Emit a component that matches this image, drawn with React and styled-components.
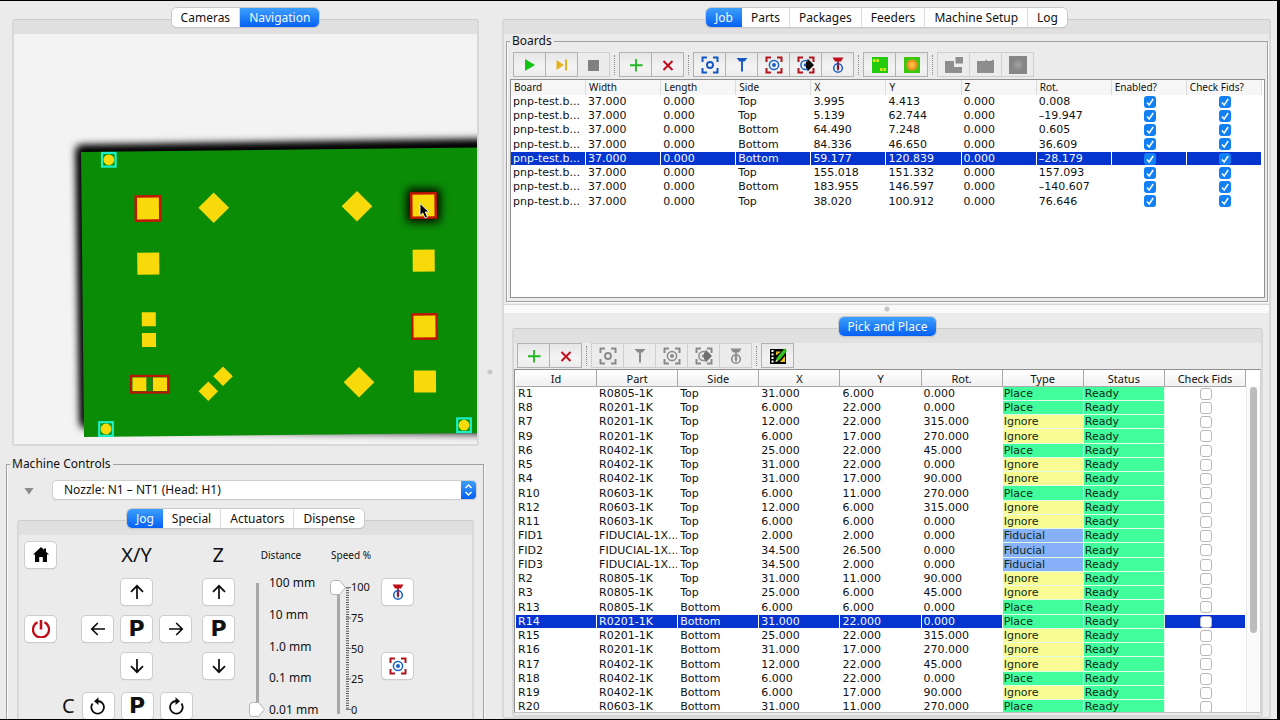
import React from "react";
import styled, { createGlobalStyle, css } from "styled-components";

const GlobalStyle = createGlobalStyle`
  * { box-sizing: border-box; }
  body {
    margin: 0;
    background: #000;
    color: #111;
    font: 12px/14px "Noto Sans", "Open Sans", sans-serif;
  }
  button, select, input { font: inherit; color: inherit; margin: 0; }
`;

const Window = styled.main`
  display: grid;
  grid-template-columns: 485fr 10px 782fr;
  grid-template-rows: minmax(0, 1fr);
  height: 100vh;
  overflow: hidden;
  background: #ebebeb;
  border: solid #000;
  border-width: 1px 3px 1px 0;
`;

const LeftPane = styled.section`
  min-width: 0;
  padding-top: 7px;
`;

const RightPane = styled.section`
  display: flex;
  flex-direction: column;
  min-width: 0;
  min-height: 0;
  padding: 7px 6px 0 7px;
`;

const Splitter = styled.div`
  display: flex;
  align-items: center;
  justify-content: center;
  padding-top: 24px;
`;

const SplitBar = styled.div`
  display: flex;
  align-items: center;
  justify-content: center;
  flex: none;
  height: 9px;
  margin-top: 2px;
  background: #fafafa;
  border-top: 1px solid #d6d6d6;
`;

const Grip = styled.span`
  width: 6px;
  height: 6px;
  border-radius: 50%;
  background: #c4c4c4;
  border: 1px solid #dedede;
`;

/* ---------- tabs ---------- */

const TabPane = styled.div`
  display: flex;
  flex-direction: column;
  margin: ${(p) => p.$margin || "0"};
  ${(p) => p.$grow && css`flex: 1; min-height: 0;`}
`;

const TabList = styled.div`
  position: relative;
  z-index: 1;
  display: flex;
  flex: none;
  align-self: center;
  height: 19px;
  background: #fff;
  border-radius: 5px;
  box-shadow: 0 0 0 1px #c9c9c9, 0 1px 1px #999;
  overflow: hidden;
`;

const Tab = styled.button`
  padding: 0 9px;
  border: 0;
  border-right: 1px solid #dcdcdc;
  background: ${(p) => (p.$active ? "linear-gradient(#3d9ffb, #0560f3)" : "#fff")};
  color: ${(p) => (p.$active ? "#f4f9ff" : "#111")};
  line-height: 18px;
  white-space: nowrap;
  &:last-child, &[aria-selected="true"] { border-right: 0; }
`;

const TabFrame = styled.div`
  display: flex;
  flex-direction: column;
  flex: 1;
  min-height: 0;
  margin-top: -8px;
  border: solid #d8d8d8;
  border-width: 1px 2px 2px 2px;
  border-top-color: #cbcbcb;
  border-radius: 3px;
  &::before {
    content: "";
    flex: none;
    height: 14px;
    background: #e0e0e0;
  }
`;

function Tabs({ names, active, children, ...rest }) {
  return (
    <TabPane {...rest}>
      <TabList role="tablist">
        {names.map((name) => (
          <Tab key={name} role="tab" aria-selected={name === active} $active={name === active}>
            {name}
          </Tab>
        ))}
      </TabList>
      <TabFrame>{children}</TabFrame>
    </TabPane>
  );
}

/* ---------- titled group ---------- */

const Group = styled.fieldset`
  min-width: 0;
  margin: ${(p) => p.$margin || "0"};
  padding: ${(p) => p.$padding || "0"};
  border: 1px solid #a0a0a0;
  box-shadow: inset 1px 0 #fafafa, 1px 1px #fafafa;
`;

const Legend = styled.legend`
  margin-left: ${(p) => p.$inset || "0"};
  padding: 0 2px;
  line-height: 14px;
`;

/* ---------- toolbar ---------- */

const Toolbar = styled.div`
  display: flex;
  flex: none;
  align-items: center;
  padding-left: 3px;
  height: 25px;
`;

const ToolGroup = styled.div`
  display: flex;
  border-left: 1px solid ${(p) => (p.$disabled ? "#cfcfcf" : "#b2b2b2")};
`;

const ToolButton = styled.button`
  display: flex;
  align-items: center;
  justify-content: center;
  width: 32px;
  height: 25px;
  padding: 0;
  border: 1px solid #b2b2b2;
  border-left: 0;
  background: linear-gradient(#e6e6e6, #f3f3f3 60%, #ececec);
  &:disabled { background: #ececec; border-color: #cfcfcf; }
  svg { width: 18px; height: 18px; display: block; }
`;

const ToolSeparator = styled.span`
  width: 1px;
  height: 20px;
  margin: 0 4px;
  border-left: 1px dotted #8c8c8c;
`;

/* ---------- icons ---------- */

const Svg = ({ children }) => (
  <svg viewBox="0 0 18 18" fill="none" aria-hidden="true">{children}</svg>
);

const Corners = ({ color }) => (
  <path d="M1.5 6V1.5H6M12 1.5H16.5V6M16.5 12V16.5H12M6 16.5H1.5V12" stroke={color} strokeWidth="2" />
);

const PlayIcon = () => <Svg><path d="M4 3L14 9L4 15Z" fill="#12c412" /></Svg>;
const StepIcon = () => (
  <Svg><path d="M3.500 4L11 9L3.500 14Z" fill="#e3b21c" /><path d="M13 3.500V14.500" stroke="#e3b21c" strokeWidth="2" /></Svg>
);
const StopIcon = () => <Svg><rect x="3" y="4" width="11" height="11" fill="#808080" /></Svg>;
const PlusIcon = () => <Svg><path d="M9 3V15.500M3 9.250H15.500" stroke="#20b820" strokeWidth="1.800" /></Svg>;
const CrossIcon = () => <Svg><path d="M4.500 5L13.500 14M13.500 5L4.500 14" stroke="#c00d1c" strokeWidth="2" /></Svg>;
const CameraIcon = ({ color = "#1457c4" }) => (
  <Svg><Corners color={color} /><circle cx="9" cy="9" r="3" stroke={color} strokeWidth="1.900" /></Svg>
);
const NozzleIcon = ({ color = "#1457c4" }) => (
  <Svg><path d="M3.500 2H14.500L11.500 5.500H6.500Z" fill={color} /><path d="M9 5V15.500" stroke={color} strokeWidth="1.900" /></Svg>
);
const TargetIcon = ({ frame = "#b0141c", color = "#1a63c8" }) => (
  <Svg>
    <Corners color={frame} />
    <circle cx="9" cy="9" r="4.600" stroke={color} strokeWidth="1.500" />
    <circle cx="9" cy="9" r="2" fill={color} />
  </Svg>
);
const TargetNextIcon = ({ frame = "#b0141c", color = "#1a63c8", arrow = "#080808" }) => (
  <Svg>
    <Corners color={frame} />
    <circle cx="8.500" cy="9" r="4.600" stroke={color} strokeWidth="1.500" />
    <circle cx="8.500" cy="9" r="1.800" fill={color} />
    <path d="M9 5.500H10.500V2.500L17 9L10.500 15.500V12.500H9Z" fill={arrow} />
  </Svg>
);
const NozzleTargetIcon = ({ frame = "#c00d1c", color = "#1a63c8", needle = "#8a1238" }) => (
  <Svg>
    <path d="M3.500 1.500H14.500L12 5.500H6Z" fill={frame} />
    <circle cx="9" cy="12" r="4.300" stroke={color} strokeWidth="1.600" />
    <path d="M9 5V14.500" stroke={needle} strokeWidth="1.600" />
    <path d="M7.500 9.500H10.500L9.500 12H8.500Z" fill={needle} />
    <circle cx="9" cy="12" r="1.300" fill={needle} />
  </Svg>
);
const PanelIcon = () => (
  <Svg>
    <rect x="1" y="1" width="16" height="16" fill="#22cb10" />
    <path d="M2 4.500H8M9 13.500H15" stroke="#d6e414" strokeWidth="2.800" strokeDasharray="2.600 0.800" />
  </Svg>
);
const FiducialIcon = () => (
  <Svg>
    <rect x="1" y="1" width="16" height="16" fill="#3dc60c" />
    <circle cx="9" cy="9" r="5.500" fill="#ef9526" />
    <circle cx="9" cy="9" r="2.800" fill="#fbbd3e" />
  </Svg>
);
const PanelizeIcon = () => (
  <Svg><path d="M0 5H9V11H17V17H0Z" fill="#8e8e8e" /><rect x="10.500" y="1" width="7.500" height="6.500" fill="#8e8e8e" /></Svg>
);
const PanelXIcon = () => (
  <Svg><path d="M0 5H8L9 3.500L10.500 5H14L16 3.500L17 5V17H0Z" fill="#8e8e8e" /><path d="M10 9L16 4.500" stroke="#808080" /></Svg>
);
const PanelFidIcon = () => (
  <Svg>
    <rect width="18" height="18" fill="#868686" />
    <circle cx="9" cy="9" r="5" fill="#929292" /><circle cx="9" cy="9" r="2.500" fill="#9c9c9c" />
  </Svg>
);
const FilmEditIcon = () => (
  <Svg>
    <rect x="1" y="2" width="16" height="15" fill="#050505" />
    <path d="M3.500 3V17" stroke="#fff" strokeWidth="2" strokeDasharray="2 1.500" />
    <path d="M11 15L16 9V15Z" fill="#f0c419" />
    <path d="M7 4.500H12L8 8H7Z" fill="#d8b420" />
    <path d="M6.500 15L8 10.500L15.500 1.500L18 4L10.500 13Z" fill="#32c425" />
    <path d="M6.500 15L7.300 12.500L8.800 14Z" fill="#f0efc9" />
  </Svg>
);
const ArrowIcon = ({ turn = 0 }) => (
  <Svg>
    <path transform={`rotate(${turn} 9 9)`} d="M9 16V2.800M3 8.800L9 2.800L15 8.800" stroke="#0a0a0a" strokeWidth="1.700" />
  </Svg>
);
const HomeIcon = () => (
  <Svg><path d="M9 1L1 8.500H3V16H7.200V11H10.800V16H15V8.500H17L14 5.700V2.500H12V3.800Z" fill="#050505" /></Svg>
);
const PowerIcon = () => (
  <Svg>
    <path d="M5.500 2.300A8 8 0 1 0 12.500 2.300" stroke="#c00d1c" strokeWidth="2.300" />
    <path d="M9 0V9.500" stroke="#c00d1c" strokeWidth="2.600" />
  </Svg>
);
const RotateIcon = ({ flip }) => (
  <Svg>
    <g transform={flip ? "translate(18 0) scale(-1 1)" : undefined}>
      <path d="M3.600 6.500A6.300 6.300 0 1 0 9 4H7" stroke="#0a0a0a" strokeWidth="1.800" />
      <path d="M9.500 0.300V8L5 4.200Z" fill="#0a0a0a" />
    </g>
  </Svg>
);

const GREY = "#8a8a8a";

function ToolItems({ items, disabled }) {
  return (
    <ToolGroup $disabled={disabled}>
      {items.map(([label, icon, off]) => (
        <ToolButton key={label} aria-label={label} disabled={disabled || off}>{icon}</ToolButton>
      ))}
    </ToolGroup>
  );
}

/* ---------- board view ---------- */

const BoardSvg = styled.svg`
  display: block;
  width: 100%;
  background: #f3f3f3;
`;

const Diamond = ({ x, y, r }) => (
  <path d={`M${x} ${y - r}L${x + r} ${y}L${x} ${y + r}L${x - r} ${y}Z`} fill="#f8d90a" />
);
const Pad = ({ x, y, s = 22 }) => (
  <rect x={x - s / 2} y={y - s / 2} width={s} height={s} fill="#f8d90a" transform={`rotate(-0.6 ${x} ${y})`} />
);
const Outlined = ({ x, y }) => (
  <rect x={x - 12.2} y={y - 12.2} width="24.400" height="24.400" fill="#f8d90a" stroke="#c01606" strokeWidth="2.500" transform={`rotate(-0.6 ${x} ${y})`} />
);
const Fiducial = ({ x, y }) => (
  <g>
    <rect x={x - 6.8} y={y - 6.8} width="13.600" height="13.600" stroke="#1df0c8" strokeWidth="2.200" fill="#0a8c06" />
    <circle cx={x} cy={y} r="5.400" fill="#f8d90a" />
  </g>
);

function BoardView() {
  return (
    <BoardSvg viewBox="14 34 463 410" role="img" aria-label="Board navigation view">
      <defs>
        <filter id="soft" x="-30%" y="-30%" width="160%" height="160%"><feGaussianBlur stdDeviation="4.500" /></filter>
        <filter id="halo" x="-60%" y="-60%" width="220%" height="220%"><feGaussianBlur stdDeviation="5" /></filter>
      </defs>
      <path d="M77 146L520 139L520 434L300 432L82 427Z" fill="#000" filter="url(#soft)" />
      <path d="M78 148L520 142L520 425L81 425Z" fill="#000" filter="url(#soft)" />
      <path d="M81 152L520 147L520 432.500L84 437Z" fill="#0a8c06" />
      <rect x="407" y="189" width="33" height="33" fill="#000" filter="url(#halo)" />
      <Outlined x={148} y={208.5} />
      <Outlined x={423.5} y={205.5} />
      <Outlined x={424.5} y={326.5} />
      <Diamond x={213.700} y={207.800} r={15.300} />
      <Diamond x={357} y={206.300} r={15.300} />
      <Diamond x={359} y={382.300} r={15.300} />
      <Diamond x={223} y={376.200} r={9.800} />
      <Diamond x={208.300} y={391.300} r={9.800} />
      <Pad x={148.300} y={263.700} />
      <Pad x={423.700} y={260.700} />
      <Pad x={425} y={381.500} />
      <Pad x={148.800} y={319.200} s={14} />
      <Pad x={149} y={340} s={14} />
      <rect x="131" y="376" width="37.500" height="16.500" fill="#0a8c06" stroke="#b81508" strokeWidth="2.300" />
      <path d="M132.500 377.500H146.500V391H132.500ZM153 377.500H167V391H153Z" fill="#f8d90a" />
      <path d="M147.200 377.500V391M152.300 377.500V391" stroke="#4b6510" />
      <Fiducial x={108.800} y={159.800} />
      <Fiducial x={106} y={429} />
      <Fiducial x={464} y={425.200} />
      <path d="M420 203.500V215.500L422.800 213L425 218L427.500 217L425.300 212H429Z" fill="#050505" stroke="#f4f4f4" strokeWidth="0.900" />
    </BoardSvg>
  );
}

/* ---------- machine controls ---------- */

const NozzleRow = styled.div`
  display: flex;
  align-items: center;
  gap: 19px;
  padding: 0 7px 0 17px;
  margin-bottom: 10px;
`;

const Disclosure = styled.button`
  width: 10px;
  height: 10px;
  padding: 0;
  border: 0;
  background: none;
  svg { display: block; }
`;

const SelectBox = styled.label`
  display: flex;
  flex: 1;
  height: 18px;
  border-radius: 4px;
  background: #fff;
  box-shadow: 0 0 0 1px #cfcfcf, 0 1px 1px #a0a0a0;
  overflow: hidden;
  select {
    flex: 1;
    appearance: none;
    border: 0;
    padding: 0 20px 0 11px;
    background: none;
    line-height: 18px;
  }
  svg {
    flex: none;
    width: 15px;
    height: 18px;
    background: linear-gradient(#3d9ffb, #0560f3);
    pointer-events: none;
  }
`;

const JogPanel = styled.div`
  display: flex;
  padding: 7px 0 0 6px;
`;

const PadRows = styled.div`
  display: flex;
`;

const PadColumn = styled.div`
  display: grid;
  grid-template-rows: repeat(4, 26px);
  row-gap: 11px;
  justify-items: center;
  align-items: center;
`;

const PadCluster = styled.div`
  display: grid;
  grid-template-columns: repeat(3, 31px);
  grid-auto-rows: 26px;
  gap: 11px 8px;
  margin: 0 12px 0 26px;
  align-items: center;
  justify-items: center;
`;

const RotateRow = styled.div`
  display: flex;
  align-items: center;
  gap: 8px;
  margin-top: 14px;
  padding-left: 37px;
`;

const JogButton = styled.button`
  display: flex;
  align-items: center;
  justify-content: center;
  width: 31px;
  height: 26px;
  padding: 0;
  border: 0;
  border-radius: 4px;
  background: #fff;
  box-shadow: 0 0 0 1px #cdcdcd, 0 1px 1px #a4a4a4;
  grid-column: ${(p) => p.$col || "auto"};
  font: bold 22px/26px "DejaVu Sans", sans-serif;
  svg { width: 18px; height: 18px; }
`;

const AxisLabel = styled.span`
  min-width: 12px;
  font-size: 20px;
  line-height: 26px;
  white-space: nowrap;
  grid-column: ${(p) => p.$col || "auto"};
`;

const SliderColumn = styled.div`
  width: ${(p) => p.$width};
  margin-left: ${(p) => p.$gap};
`;

const SliderTitle = styled.label`
  display: block;
  font-size: 10px;
  line-height: 26px;
  text-align: center;
  white-space: nowrap;
`;

const SliderBody = styled.div`
  display: flex;
  align-items: flex-end;
  height: 149px;
  gap: ${(p) => p.$gap || "0"};
`;

const thumb = `url("data:image/svg+xml,%3Csvg xmlns='http://www.w3.org/2000/svg' viewBox='0 0 16 15'%3E%3Cpath d='M3.500 .5H9.500L15.500 7.500L9.500 14.500H3.500Q.5 14.500 .5 11.500V3.500Q.5 .5 3.500 .5Z' fill='white' stroke='%23b4b4b4'/%3E%3C/svg%3E")`;

const Slider = styled.input`
  appearance: none;
  writing-mode: vertical-lr;
  direction: rtl;
  flex: none;
  width: 16px;
  height: 137px;
  background: linear-gradient(#a8a8a8, #a8a8a8) center / 3px 131px no-repeat;
  &::-webkit-slider-thumb {
    appearance: none;
    width: 16px;
    height: 15px;
    background: ${thumb} center / 16px 15px no-repeat;
  }
`;

const Scale = styled.div`
  display: flex;
  flex-direction: column;
  justify-content: space-between;
  white-space: nowrap;
  height: ${(p) => p.$height};
  font-size: ${(p) => p.$size || "12px"};
  line-height: 14px;
`;

const Ticks = styled.svg`
  flex: none;
  width: 5px;
  height: 123px;
  margin-bottom: 7px;
`;

const SideButtons = styled.div`
  display: flex;
  flex-direction: column;
  gap: 48px;
  padding-top: 37px;
  margin-left: 10px;
`;

function MachineControls() {
  return (
    <Group $margin="11px 1px 0 6px" $padding="10px 0 12px 0">
      <Legend $inset="3px">Machine Controls</Legend>
      <NozzleRow>
        <Disclosure aria-label="Collapse">
          <svg width="10" height="10" viewBox="0 0 10 10"><path d="M0.500 3H9.500L5 9.500Z" fill="#8a8a8a" /></svg>
        </Disclosure>
        <SelectBox>
          <select aria-label="Selected tool"><option>Nozzle: N1 – NT1 (Head: H1)</option></select>
          <svg viewBox="0 0 15 18" fill="none"><path d="M4.500 7L7.500 4L10.500 7M4.500 11L7.500 14L10.500 11" stroke="#fff" strokeWidth="1.500" /></svg>
        </SelectBox>
      </NozzleRow>
      <Tabs names={["Jog", "Special", "Actuators", "Dispense"]} active="Jog" $margin="0 9px 0 10px">
        <JogPanel>
          <div>
            <PadRows>
              <PadColumn>
                <JogButton aria-label="Home"><HomeIcon /></JogButton>
                <span />
                <JogButton aria-label="Power"><PowerIcon /></JogButton>
              </PadColumn>
              <PadCluster>
                <AxisLabel $col="2">X/Y</AxisLabel>
                <JogButton $col="2" aria-label="Y up"><ArrowIcon /></JogButton>
                <JogButton $col="1" aria-label="X left"><ArrowIcon turn={-90} /></JogButton>
                <JogButton>P</JogButton>
                <JogButton aria-label="X right"><ArrowIcon turn={90} /></JogButton>
                <JogButton $col="2" aria-label="Y down"><ArrowIcon turn={180} /></JogButton>
              </PadCluster>
              <PadColumn>
                <AxisLabel>Z</AxisLabel>
                <JogButton aria-label="Z up"><ArrowIcon /></JogButton>
                <JogButton>P</JogButton>
                <JogButton aria-label="Z down"><ArrowIcon turn={180} /></JogButton>
              </PadColumn>
            </PadRows>
            <RotateRow>
              <AxisLabel>C</AxisLabel>
              <JogButton aria-label="Rotate counterclockwise"><RotateIcon /></JogButton>
              <JogButton>P</JogButton>
              <JogButton aria-label="Rotate clockwise"><RotateIcon flip /></JogButton>
            </RotateRow>
          </div>
          <SliderColumn $width="64px" $gap="15px">
            <SliderTitle htmlFor="distance">Distance</SliderTitle>
            <SliderBody $gap="4px">
              <Slider id="distance" type="range" min="0" max="4" defaultValue="0" />
              <Scale $height="141px">
                <span>100 mm</span><span>10 mm</span><span>1.0 mm</span><span>0.1 mm</span><span>0.01 mm</span>
              </Scale>
            </SliderBody>
          </SliderColumn>
          <SliderColumn $width="42px" $gap="17px">
            <SliderTitle htmlFor="speed">Speed %</SliderTitle>
            <SliderBody>
              <Slider id="speed" type="range" min="0" max="100" defaultValue="100" />
              <Ticks viewBox="0 0 5 123" aria-hidden="true">
                <path d="M1.500 0.500V123" stroke="#555" strokeWidth="3" strokeDasharray="1 1.400" />
                <path d="M0 .5H5M0 31H5M0 61.500H5M0 92H5M0 122.500H5" stroke="#777" />
              </Ticks>
              <Scale $height="137px" $size="11px">
                <span>100</span><span>75</span><span>50</span><span>25</span><span>0</span>
              </Scale>
            </SliderBody>
          </SliderColumn>
          <SideButtons>
            <JogButton aria-label="Nozzle to camera"><NozzleTargetIcon /></JogButton>
            <JogButton aria-label="Camera to nozzle"><TargetIcon /></JogButton>
          </SideButtons>
        </JogPanel>
      </Tabs>
    </Group>
  );
}

/* ---------- tables ---------- */

const DataTable = styled.table`
  table-layout: fixed;
  width: 100%;
  border-collapse: separate;
  border-spacing: 0;
  font-family: "DejaVu Sans", "Noto Sans", sans-serif;
  font-size: 11px;
  line-height: 13px;
  thead { font-family: "Noto Sans", "Open Sans", sans-serif; }
`;

const Row = styled.tr`
  height: 14px;
  &:nth-child(4n) { height: 15px; }
  ${(p) => p.$selected && css`
    color: #f4f7ff;
    td { background-color: #0634cf; }
  `}
`;

const typeColor = { Place: "#42fd9b", Ignore: "#f8fc92", Fiducial: "#86b0f8", Ready: "#42fd9b" };

const Cell = styled.td`
  padding: 0 0 0 ${(p) => (p.$tone ? "1px" : "2px")};
  overflow: hidden;
  white-space: nowrap;
  border: solid ${(p) => (p.$edge ? "#e4fbea" : "#fff")};
  border-width: 0 1px 1px 0;
  background-clip: padding-box;
  text-align: ${(p) => (p.$center ? "center" : "left")};
  && {
    ${(p) => p.$tone && css`
      background-color: ${typeColor[p.$tone]};
      color: #0d2a1b;
    `}
  }
`;

const PlainHead = styled.th`
  height: 15px;
  padding: 0 0 0 3px;
  background: #f6f6f6;
  border-right: 1px solid #dcdcdc;
  font-size: 10px;
  font-weight: normal;
  text-align: left;
`;

const RaisedHead = styled.th`
  height: 17px;
  padding: 0;
  background: linear-gradient(#fff, #f0f0f0);
  border: solid #a9a9a9;
  border-width: 0 1px 1px 0;
  font-size: 11px;
  font-weight: normal;
  text-align: center;
`;

const tick = `url("data:image/svg+xml,%3Csvg xmlns='http://www.w3.org/2000/svg' viewBox='0 0 12 12'%3E%3Cpath d='M3 6.500L5.200 9L9.200 3' fill='none' stroke='white' stroke-width='1.500'/%3E%3C/svg%3E")`;

const Check = styled.input`
  appearance: none;
  display: block;
  width: 12px;
  height: 12px;
  margin: 0 auto;
  border: 1px solid #b9b9b9;
  border-radius: 3px;
  background: #fff;
  &:checked {
    border: 0;
    background: #1180f4 ${tick} center / 12px 12px;
  }
`;

const BoardsBox = styled.div`
  height: 219px;
  margin-top: 2px;
  padding-right: 2px;
  background: #fff;
  border: 1px solid #8f8f8f;
  overflow: hidden;
`;

const PlacementsBox = styled.div`
  display: flex;
  flex: 1;
  min-height: 0;
  margin: 1px 0 2px;
  background: #fff;
  border: 1px solid #8f8f8f;
  border-right-color: #d0d0d0;
  border-bottom-color: #c0c0c0;
  overflow: hidden;
`;

const TableArea = styled.div`
  flex: 1;
  min-width: 0;
  padding-left: 1px;
`;

const ScrollTrack = styled.div`
  width: 14px;
  margin-top: 16px;
  padding: 1px 3px;
  background: #fafafa;
  border-left: 1px solid #ececec;
`;

const ScrollThumb = styled.div`
  height: 76%;
  border-radius: 4px;
  background: #bcbcbc;
`;

const boardColumns = ["Board", "Width", "Length", "Side", "X", "Y", "Z", "Rot.", "Enabled?", "Check Fids?"];
const boards = [
  ["Top", "3.995", "4.413", "0.008"],
  ["Top", "5.139", "62.744", "–19.947"],
  ["Bottom", "64.490", "7.248", "0.605"],
  ["Bottom", "84.336", "46.650", "36.609"],
  ["Bottom", "59.177", "120.839", "–28.179"],
  ["Top", "155.018", "151.332", "157.093"],
  ["Bottom", "183.955", "146.597", "–140.607"],
  ["Top", "38.020", "100.912", "76.646"],
];

function BoardsTable() {
  return (
    <DataTable>
      <thead>
        <tr>{boardColumns.map((c) => <PlainHead key={c} scope="col">{c}</PlainHead>)}</tr>
      </thead>
      <tbody>
        {boards.map(([side, x, y, rot], i) => (
          <Row key={i} $selected={i === 4}>
            {["pnp-test.b...", "37.000", "0.000", side, x, y, "0.000", rot].map((v, j) => (
              <Cell key={j}>{v}</Cell>
            ))}
            <Cell $center><Check type="checkbox" defaultChecked aria-label={`Board ${i + 1} enabled`} /></Cell>
            <Cell $center><Check type="checkbox" defaultChecked aria-label={`Board ${i + 1} check fids`} /></Cell>
          </Row>
        ))}
      </tbody>
    </DataTable>
  );
}

const placementColumns = ["Id", "Part", "Side", "X", "Y", "Rot.", "Type", "Status", "Check Fids"];
const placements = `
R1|R0805-1K|Top|31.000|6.000|0.000|Place
R8|R0201-1K|Top|6.000|22.000|0.000|Place
R7|R0201-1K|Top|12.000|22.000|315.000|Ignore
R9|R0201-1K|Top|6.000|17.000|270.000|Ignore
R6|R0402-1K|Top|25.000|22.000|45.000|Place
R5|R0402-1K|Top|31.000|22.000|0.000|Ignore
R4|R0402-1K|Top|31.000|17.000|90.000|Ignore
R10|R0603-1K|Top|6.000|11.000|270.000|Place
R12|R0603-1K|Top|12.000|6.000|315.000|Ignore
R11|R0603-1K|Top|6.000|6.000|0.000|Ignore
FID1|FIDUCIAL-1X...|Top|2.000|2.000|0.000|Fiducial
FID2|FIDUCIAL-1X...|Top|34.500|26.500|0.000|Fiducial
FID3|FIDUCIAL-1X...|Top|34.500|2.000|0.000|Fiducial
R2|R0805-1K|Top|31.000|11.000|90.000|Ignore
R3|R0805-1K|Top|25.000|6.000|45.000|Ignore
R13|R0805-1K|Bottom|6.000|6.000|0.000|Place
R14|R0201-1K|Bottom|31.000|22.000|0.000|Place
R15|R0201-1K|Bottom|25.000|22.000|315.000|Ignore
R16|R0201-1K|Bottom|31.000|17.000|270.000|Ignore
R17|R0402-1K|Bottom|12.000|22.000|45.000|Ignore
R18|R0402-1K|Bottom|6.000|22.000|0.000|Place
R19|R0402-1K|Bottom|6.000|17.000|90.000|Ignore
R20|R0603-1K|Bottom|31.000|11.000|270.000|Place
`.trim().split("\n").map((line) => line.split("|"));

function PlacementsTable() {
  return (
    <DataTable>
      <thead>
        <tr>{placementColumns.map((c) => <RaisedHead key={c} scope="col">{c}</RaisedHead>)}</tr>
      </thead>
      <tbody>
        {placements.map((p) => (
          <Row key={p[0]} $selected={p[0] === "R14"}>
            {p.slice(0, 6).map((v, j) => <Cell key={j}>{v}</Cell>)}
            <Cell $tone={p[6]} $edge>{p[6]}</Cell>
            <Cell $tone="Ready" $edge>Ready</Cell>
            <Cell $center><Check type="checkbox" aria-label={`${p[0]} check fids`} /></Cell>
          </Row>
        ))}
      </tbody>
    </DataTable>
  );
}

const mainTabs = ["Job", "Parts", "Packages", "Feeders", "Machine Setup", "Log"];

export default function App() {
  return (
    <>
      <GlobalStyle />
      <Window>
        <LeftPane>
          <Tabs names={["Cameras", "Navigation"]} active="Navigation" $margin="0 6px 0 12px">
            <BoardView />
          </Tabs>
          <MachineControls />
        </LeftPane>
        <Splitter><Grip /></Splitter>
        <RightPane>
          <Tabs names={mainTabs} active="Job" $grow>
            <Group $margin="0 1px 0 2px" $padding="4px 2px 3px 3px">
              <Legend>Boards</Legend>
              <Toolbar>
                <ToolItems items={[["Start", <PlayIcon />], ["Step", <StepIcon />], ["Stop", <StopIcon />, true]]} />
                <ToolSeparator />
                <ToolItems items={[["Add board", <PlusIcon />], ["Remove board", <CrossIcon />]]} />
                <ToolSeparator />
                <ToolItems
                  items={[
                    ["Capture camera location", <CameraIcon />],
                    ["Capture tool location", <NozzleIcon />],
                    ["Position camera", <TargetIcon />],
                    ["Position camera next", <TargetNextIcon />],
                    ["Position tool", <NozzleTargetIcon />],
                  ]}
                />
                <ToolSeparator />
                <ToolItems items={[["Two point locate", <PanelIcon />], ["Fiducial check", <FiducialIcon />]]} />
                <ToolSeparator />
                <ToolItems
                  disabled
                  items={[["Panelize", <PanelizeIcon />], ["Panel X-out", <PanelXIcon />], ["Panel fiducials", <PanelFidIcon />]]}
                />
              </Toolbar>
              <BoardsBox><BoardsTable /></BoardsBox>
            </Group>
            <SplitBar><Grip /></SplitBar>
            <Tabs names={["Pick and Place"]} active="Pick and Place" $grow $margin="4px 6px 0 8px">
              <Toolbar>
                <ToolItems items={[["Add placement", <PlusIcon />], ["Remove placement", <CrossIcon />]]} />
                <ToolSeparator />
                <ToolItems
                  disabled
                  items={[
                    ["Capture camera", <CameraIcon color={GREY} />],
                    ["Capture tool", <NozzleIcon color={GREY} />],
                    ["Move camera", <TargetIcon frame={GREY} color={GREY} />],
                    ["Move camera next", <TargetNextIcon frame={GREY} color={GREY} arrow="#6f6f6f" />],
                    ["Move tool", <NozzleTargetIcon frame={GREY} color={GREY} needle={GREY} />],
                  ]}
                />
                <ToolSeparator />
                <ToolItems items={[["Edit feeder", <FilmEditIcon />]]} />
              </Toolbar>
              <PlacementsBox>
                <TableArea><PlacementsTable /></TableArea>
                <ScrollTrack><ScrollThumb /></ScrollTrack>
              </PlacementsBox>
            </Tabs>
          </Tabs>
        </RightPane>
      </Window>
    </>
  );
}
